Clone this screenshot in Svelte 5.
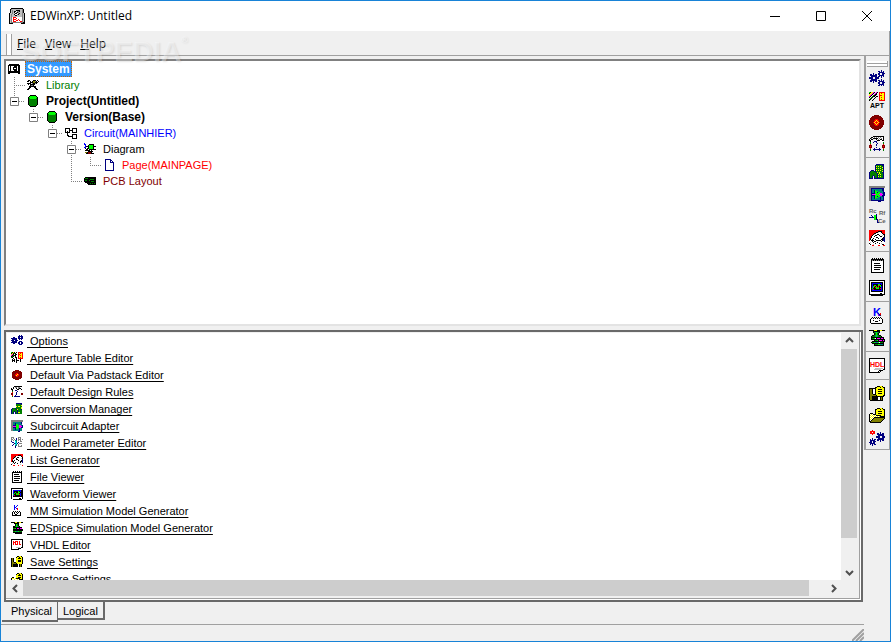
<script lang="ts">
  type Label = { text: string; x: number; y: number; size: number; color: string };
  type Icon = { rows: string[]; labels?: Label[] };

  const palette: Record<string, string> = {
    k: '#000000',
    n: '#000080',
    b: '#0000ff',
    r: '#ff0000',
    m: '#800000',
    g: '#008000',
    l: '#00ff00',
    y: '#ffff00',
    o: '#808000',
    w: '#ffffff',
    s: '#808080',
    v: '#c0c0c0',
    t: '#008080',
    c: '#00ffff',
    p: '#ff00ff'
  };

  // one character per pixel, a dot is transparent
  const icons: Record<string, Icon> = {
    app: {
      rows: [
        '..kkkkkkkkkkkk..',
        '.ksvvvvvvvvvvsk.',
        '.kvsvvvkkkkvvsk.',
        '.kvsvkkwsskvvsk.',
        '.kvsvkwsksvvvsk.',
        'kvvsvvkkwskvvsvk',
        'kvsvvkwwskvvvsvk',
        'kvsvvvkkvvvvvsvk',
        'kvsvvvvvvvvvvsvk',
        'kvswrrrwwwwwwsvk',
        'kvswrwwrwwwwwsvk',
        'kvswrrrwwrwwwsvk',
        'kvswrwwrrwrwwsvk',
        'kvswrrrwwwwrrsvk',
        'kvsssssssssssskk',
        'kkkk........kkkk'
      ]
    },
    options: {
      rows: [
        '............n...',
        '.........nn.n.n.',
        '..........nnnnn.',
        '....n....nnw.nnn',
        '.nn.n.nn.nn..nn.',
        '.nnnnnnn..nnnnn.',
        '..nnnnnn.nn.n.n.',
        'nnnn..nnnn..n...',
        'nnnn..nnnn......',
        '..nnnnnn....n...',
        '.nnnnnnn.nn.n.n.',
        '.nn.n.nn..nnnnn.',
        '....n....nn..nnn',
        '.........nn..nn.',
        '..........nnnnn.',
        '.........nn.n.n.'
      ]
    },
    aperture: {
      rows: [
        'lkyypk.pk.rrrrrr',
        'kyypk.pk..ryryyr',
        'yypk.pkk..ryyyyr',
        'ypk.gkk...rrryyr',
        'pk.gkk.kk.ryyyyr',
        'k.gk..k...ryryyr',
        '.gk..k....ryyyyr',
        'gk..k.....ryryyr',
        'k..k......rrrrrr',
        '................',
        '................',
        '................',
        '................',
        '................',
        '................',
        '................'
      ],
      labels: [{ text: 'APT', x: 1, y: 16, size: 7, color: '#000000' }]
    },
    via: {
      rows: [
        '................',
        '.....mmmmm......',
        '...mmmmmmmmm....',
        '..mmmmmmmmmmm...',
        '.mmmmmmmmmmmmm..',
        '.mmmmmrrrmmmmm..',
        'mmmmmrryrrmmmmm.',
        'mmmmmryryrmmmmm.',
        'mmmmryrrryrmmmm.',
        'mmmmmryryrmmmmm.',
        'mmmmmrryrrmmmmm.',
        '.mmmmmrrrmmmmm..',
        '.mmmmmmmmmmmmm..',
        '..mmmmmmmmmmm...',
        '...mmmmmmmmm....',
        '.....mmmmm......'
      ]
    },
    rules: {
      rows: [
        '....kkkkkkkkkkk.',
        '..kkwswswswswwk.',
        '.kswkkkkkwswswk.',
        'kwkk...kwswkkwk.',
        'kkw.....kkkwwkk.',
        '.kw..nnn..wwwww.',
        '.gw.n..n....w.g.',
        '.g......n.....g.',
        '.r.....n......r.',
        'mmm....n.....mmm',
        'mrm..........mrm',
        'mmm....n.....mmm',
        '.r...n....n...r.',
        '.g..nnnnnnnn..g.',
        '.g...n....n...g.',
        '................'
      ]
    },
    conversion: {
      rows: [
        '.......nnnnnnnn.',
        '......nggggggnn.',
        '......nygygyggn.',
        '......nggggggyn.',
        '......nygygyggn.',
        '......nggggggyn.',
        '..nnn.nygygyggn.',
        '.ngggnnggggggyn.',
        'nggggggnygyggnn.',
        'ngggggggngygggn.',
        'ngggggggnygyggn.',
        'ngggngggngggggn.',
        'nggn.nggnygyggn.',
        'nggn.nggngggggn.',
        'nnnn.nnnnnnnnnn.',
        '................'
      ]
    },
    subcircuit: {
      rows: [
        'ssssssssssssssss',
        'ssssssssssssssss',
        'ssnnnnnnnnnnnnn.',
        'ssnttttttttttnn.',
        'ssnttnlttttttnn.',
        'ssnttnllltttttn.',
        'ssnttnllnlltttnn',
        'ssnnnnlllllpptnn',
        'ssnpppplllppppnn',
        'ssnnnnlllllppnnn',
        'ssnttnllnllttnn.',
        'ssnttnlllttnttn.',
        'ssnttnlttttnttn.',
        'ssnttttttttnttn.',
        'ssnnnnnnnnnnnnn.',
        '.........nnn....'
      ]
    },
    parameters: {
      rows: [
        '................',
        '................',
        '................',
        '................',
        '................',
        '................',
        '.......n........',
        '..n..lln........',
        '...n.lln........',
        'nnnnnllk........',
        '.....llk........',
        '.....llnn.......',
        '........n.......',
        '........n.......',
        '........nn......',
        '................'
      ],
      labels: [
        { text: 'Rc', x: 0, y: 5, size: 6, color: '#606060' },
        { text: 'Rf', x: 10, y: 7, size: 6, color: '#606060' },
        { text: 'Ce', x: 9, y: 15, size: 6, color: '#606060' }
      ]
    },
    list: {
      rows: [
        'rrrrrrrrrrrrrrrr',
        'rrrrrrrrrkkkkrrr',
        'rrrrrrrkkvwwkrrr',
        'rrrrrkkwwwwwwkrr',
        'rrrrkvwwkkwwwwkk',
        'rrrkwwkkwwkwwvwk',
        'rrkwwkwwwwwkkwwk',
        'rrkwwwwkkwwwwwkn',
        'rkwwkwwwwkwwwknn',
        'rkwkwwkwwwwwkknn',
        'rwkkkwwkkkkkwknn',
        'wwwkwkkwwwwwkwwn',
        'wvwwkwwwkwwwwwww',
        'kwwwwwkwwwkwvwww',
        'wkwwvwwwwwwwwkkw',
        'wwwrrwwwwrrwwwrr'
      ]
    },
    viewer: {
      rows: [
        '...k.k.k.k.k.k..',
        '..kkkkkkkkkkkkk.',
        '..ksksksksksksk.',
        '..kwwwwwwwwwwwk.',
        '..kwwwwwwwwwwwk.',
        '..kwwkkkkkkwwwk.',
        '..kwwwwwwwwwwwk.',
        '..kwwkkkkkkkwwk.',
        '..kwwwwwwwwwwwk.',
        '..kwwkkkkkkkwwk.',
        '..kwwwwwwwwwwwk.',
        '..kwwkkkkkkwwwk.',
        '..kwwwwwwwwwwwk.',
        '..kwwwwwwwwwwwk.',
        '..kkkkkkkkkkkkk.',
        '................'
      ]
    },
    waveform: {
      rows: [
        'kkkkkkkkkkkkkkkk',
        'kwwwwwwwwwwwwwwk',
        'kwkkkkkkkkkkkkwk',
        'kwkbbbbbbbbbbkwk',
        'kwkbkkkkkllkbkwk',
        'kwkbkllkklrlkkwk',
        'kwkblrklkrklbkwk',
        'kwkblkrlrlkkbkwk',
        'kwklkkklllkrbkwk',
        'kwkbrkkkkkkkbkwk',
        'kwkbbbbbbbbbbkwk',
        'kwkkkkkkkkkkkkwk',
        'kwwwwwwwwwwwwwwk',
        'kwwwwwwwwwwkkwwk',
        'kkkkkkkkkkkkkkkk',
        '..kkkkkkkkkkkk..'
      ]
    },
    mm: {
      rows: [
        '................',
        '................',
        '................',
        '................',
        '................',
        '.........r.r....',
        '..........rr....',
        '.........rrr....',
        '................',
        '...k.k.k.k.k....',
        '..kwkwkwkwkwk...',
        '.kwwwwwwwwwwwk..',
        '.kwwkwwwwwkwwk..',
        '.kwwwwkkkwwwwk..',
        '.kwwwwwwwwwwwk..',
        '..kkkkkkkkkkk...'
      ],
      labels: [{ text: 'K', x: 4, y: 8, size: 11, color: '#0000ff' }]
    },
    spice: {
      rows: [
        'kkkkkyyykkkyykkk',
        '....kkkkkkk.....',
        '....kgtltgk.....',
        '.....kglgk......',
        '.....kglgk......',
        '...kkgtltgkk....',
        '..kgggtltgggk...',
        '..kkkkkkkkkkkkk.',
        '..kgglwkpppkppk.',
        '..kkkkkkkkkkkkkk',
        '.....kgglkpppkpk',
        '...kkkkkkkkkkkkk',
        '..kggltttlwgggk.',
        '...kkkkkkkkkkkk.',
        '.....kggglltttk.',
        '.....kkkkkkkkkk.'
      ]
    },
    vhdl: {
      rows: [
        'kkkkkkkkkkkkkkkk',
        'kwwwwwwwwwwwwwwk',
        'kwrwrwrrwwrwwwwk',
        'kwrwrwrwrwrwwwwk',
        'kwwwwwwwwwwwwwwk',
        'kwwwwwwwwwwwwwwk',
        'kwwwwwwwwwwwwwwk',
        'kwwwwwwwwwwwwwwk',
        'kwwwwwwwwwwwwwwk',
        'kwwwwwwwwwwwwwwk',
        'kwwwwwvvvvvvvvwk',
        'kwwwwvvvvvvvwwkk',
        'kwwwwwwwwwkkkk..',
        'kwwwwwwwwkwk....',
        'kkkkkkkkkkk.....',
        '................'
      ].map((row, y) => (y === 2 || y === 3 ? 'kwwwwwwwwwwwwwwk' : row)),
      labels: [{ text: 'HDL', x: 1, y: 9, size: 7, color: '#ff0000' }]
    },
    save: {
      rows: [
        '........kkkyyk..',
        '......kkyyykyykk',
        'kkkkkkkyyyyyyyyk',
        'kookwwkyykkkkyyk',
        'kookwwkyyyyyyyyk',
        'kookwwkyykkkkyyk',
        'kookwwkyyyyyyyyk',
        'kookwwkyykkkkyyk',
        'koookkkyyyyyyyyk',
        'kooooookyyyyyykk',
        'kookkkkkkkkkkkk.',
        'kookkkkkkwwkok..',
        'kookkkkkkwwkok..',
        'kookkkkkkwwkok..',
        '.kkkkkkkkkkkkk..',
        '................'
      ]
    },
    restore: {
      rows: [
        '........kkkyyk..',
        '......kkyyykyykk',
        '......kyyyyyyyyk',
        '......kyykkkkyyk',
        '......kyyyyyyyyk',
        '.kkk..kyykkkkyyk',
        'kwywkkkyyyyyyyyk',
        'kywywywkkkkkyyyk',
        'kwywywywywykkkkk',
        'kywywkkkkkkkkkkk',
        'kwywkooooooooook',
        'kywkooooooooook.',
        'kwkooooooooook..',
        'kkooooooooook...',
        '.kkkkkkkkkkk....',
        '................'
      ]
    },
    gears: {
      rows: [
        '...r............',
        '.rrrrr..........',
        '.rr.rr.....n....',
        '.rrrrr..nn.n.nn.',
        '...r....nnnnnnn.',
        '.........nnnnnn.',
        '.......nnnn..nnn',
        '.......nnnn..nnn',
        '...n.....nnnnnn.',
        '.n.n.nn.nnnnnnn.',
        '.nnnnn..nn.n.nn.',
        '.nn.nnn....n....',
        'nnn.nn..........',
        '.nnnnn..........',
        '.n.n.nn.........',
        '...n............'
      ]
    },
    system: {
      rows: [
        '............',
        '.kkkkkkkkkk.',
        'kkkkkkkkkkkk',
        'kwkwwwkkkwkk',
        'kwkwwkkkkwkk',
        'kwkwwkwwkwkk',
        'kwkwwkkkkwkk',
        'kwkwwwkkkwkk',
        'kkkkkkkkkkkk',
        'kkkkkkkkkkkk',
        'kk........kk',
        '............'
      ]
    },
    library: {
      rows: [
        '............',
        '.kk...kkk.k.',
        'kk.k.koosk.k',
        '...kkkookkk.',
        'kkkkwskksk..',
        '.k.kkkkk....',
        '...kssk.....',
        '..kkkkkkk...',
        '..kk...kk...',
        '.kk.....kk..',
        'kk.......kk.',
        '............'
      ]
    },
    database: {
      rows: [
        '...kkkkkk...',
        '..kllllllk..',
        '.kllllllllk.',
        '.kgllllllgk.',
        '.kggggggggk.',
        '.kggggggggk.',
        '.kggggggggk.',
        '.kggggggggk.',
        '.kggggggggk.',
        '.kggggggggk.',
        '..kggggggk..',
        '...kkkkkk...'
      ]
    },
    circuit: {
      rows: [
        '............',
        'kkkkk..kkkkk',
        'k...k..k...k',
        'k...kkkk...k',
        'k.k.k..k...k',
        'kkkkk..kkkkk',
        '..k.........',
        '..k....kkkkk',
        '..kk...k...k',
        '...kkkkk...k',
        '.......k...k',
        '.......kkkkk'
      ]
    },
    diagram: {
      rows: [
        'b...........',
        'bb...kkkkk..',
        '.b..kllllk..',
        '.bkkkllllkkk',
        'bb..kllllk..',
        '.k.kkllllk..',
        '..kk.kkkkkkk',
        '.kkkkk.k....',
        '....kkkkk...',
        '.ookmmmk....',
        '..kkmmmkkk..',
        '............'
      ]
    },
    page: {
      rows: [
        '..nnnnnn....',
        '..nwwwwnn...',
        '..nwwwwnwn..',
        '..nwwwwnnnn.',
        '..nwwwwwwwn.',
        '..nwwwwwwwn.',
        '..nwwwwwwwn.',
        '..nwwwwwwwn.',
        '..nwwwwwwwn.',
        '..nwwwwwwwn.',
        '..nwwwwwwwn.',
        '..nnnnnnnnn.'
      ]
    },
    pcb: {
      rows: [
        '............',
        '............',
        '.kkkkkkkkkkk',
        'kgggkkkkkkkk',
        'kkkkkkggggkk',
        'kggkkgkkkkkk',
        'kkkkkkkgggkk',
        '.kkkkkkkkkkk',
        '...kkkgkgkgk',
        '....kkkkkkkk',
        '............',
        '............'
      ]
    }
  };

  // redrawn 12px versions for icons that lose detail when scaled down
  const smallIcons: Record<string, Icon> = {
    options: {
      rows: [
        '........n.n.',
        '.......nnnnn',
        '..nn...nn.nn',
        'nnnnnn.nnnnn',
        '.nnnnn..n.n.',
        'nnn.nnn.....',
        '.nnnnn..nnn.',
        'nnnnnn.nn.nn',
        '..nn...nn.nn',
        '........nnn.',
        '............',
        '............'
      ]
    },
    aperture: {
      rows: [
        'lkyk.k.rrrrr',
        'kykgk..ryryr',
        'ypk.kk.rryyr',
        'pkgkk..ryryr',
        'kgk.k..ryyyr',
        'gk..kk.ryryr',
        '..k..k.rrrrr',
        '.k.k.k...k..',
        '.kkk.kkk.k..',
        '.k.k.k...k..',
        '.....k......',
        '............'
      ]
    },
    via: {
      rows: [
        '............',
        '....mmmm....',
        '..mmmmmmmm..',
        '.mmmmmmmmmm.',
        '.mmmmrrmmmm.',
        '.mmmrryrmmm.',
        '.mmmryrrmmm.',
        '.mmmmrrmmmm.',
        '.mmmmmmmmmm.',
        '..mmmmmmmm..',
        '....mmmm....',
        '............'
      ]
    },
    parameters: {
      rows: [
        'sss....sss..',
        's.s..n.s.s..',
        'ss.s.n.sss.s',
        's.s.tt.s.s..',
        'n...ct...ss.',
        '.nn.ct.n....',
        '...ntcn.sss.',
        '..n.ct.s....',
        '.n..tt.s..s.',
        '....n..ssss.',
        '....n.......',
        '............'
      ]
    },
    viewer: {
      rows: [
        '..k.k.k.k.k.',
        '.kkkkkkkkkk.',
        '.kwwwwwwwwk.',
        '.kwkkkkkwwk.',
        '.kwwwwwwwwk.',
        '.kwkkkkkkwk.',
        '.kwwwwwwwwk.',
        '.kwkkkkkkwk.',
        '.kwwwwwwwwk.',
        '.kwkkkkkwwk.',
        '.kwwwwwwwwk.',
        '.kkkkkkkkkk.'
      ]
    },
    mm: {
      rows: [
        '...b..b.....',
        '...b.b......',
        '...bb.......',
        '...b.br.....',
        '...b..r.....',
        '............',
        '..k.k.k.k...',
        '.kwkwkwkwk..',
        '.kwkwwkwwk..',
        '.kwwkkwwwk..',
        '.kkkkkkkkk..',
        '............'
      ]
    },
    vhdl: {
      rows: [
        'kkkkkkkkkkkk',
        'kwwwwwwwwwwk',
        'kwrwrrrwrwwk',
        'kwrrrwrwrwwk',
        'kwrwrwrwrwwk',
        'kwrwrrrwrrwk',
        'kwwwwwwwwwwk',
        'kwwwwwwwwwwk',
        'kwwwwvvvvwkk',
        'kwwwwwwkkk..',
        'kkkkkkkk....',
        '............'
      ]
    }
  };

  const toPixels = (rows: string[]) =>
    rows.flatMap((row, y) =>
      [...row.matchAll(/([a-z])\1*/g)].map((run) => ({
        x: run.index,
        y,
        width: run[0].length,
        fill: palette[run[1]]
      }))
    );

  // cells hold the connector drawn in each indent column
  const tree = [
    { name: 'System', icon: 'system', kind: 'root', cells: [] },
    { name: 'Library', icon: 'library', kind: 'library', cells: ['tee'] },
    { name: 'Project(Untitled)', icon: 'database', kind: 'project', cells: ['minus'] },
    { name: 'Version(Base)', icon: 'database', kind: 'project', cells: ['', 'minus'] },
    { name: 'Circuit(MAINHIER)', icon: 'circuit', kind: 'circuit', cells: ['', '', 'minus'] },
    { name: 'Diagram', icon: 'diagram', kind: 'diagram', cells: ['', '', '', 'minus more'] },
    { name: 'Page(MAINPAGE)', icon: 'page', kind: 'page', cells: ['', '', '', 'line', 'end'] },
    { name: 'PCB Layout', icon: 'pcb', kind: 'pcb', cells: ['', '', '', 'end'] }
  ];

  const toolGroups = [
    [
      { icon: 'options', name: 'Options' },
      { icon: 'aperture', name: 'Aperture Table Editor' },
      { icon: 'via', name: 'Default Via Padstack Editor' },
      { icon: 'rules', name: 'Default Design Rules' }
    ],
    [
      { icon: 'conversion', name: 'Conversion Manager' },
      { icon: 'subcircuit', name: 'Subcircuit Adapter' },
      { icon: 'parameters', name: 'Model Parameter Editor' },
      { icon: 'list', name: 'List Generator' }
    ],
    [
      { icon: 'viewer', name: 'File Viewer' },
      { icon: 'waveform', name: 'Waveform Viewer' }
    ],
    [
      { icon: 'mm', name: 'MM Simulation Model Generator' },
      { icon: 'spice', name: 'EDSpice Simulation Model Generator' }
    ],
    [{ icon: 'vhdl', name: 'VHDL Editor' }],
    [
      { icon: 'save', name: 'Save Settings' },
      { icon: 'restore', name: 'Restore Settings' },
      { icon: 'gears', name: 'Reset Settings' }
    ]
  ];

  const commands = toolGroups.flat().slice(0, -1);
  const menus = ['File', 'View', 'Help'];
  const tabs = ['Physical', 'Logical'];

  let selected = $state('System');
  let activeTab = $state('Physical');
</script>

{#snippet glyph(icon: Icon, size: number)}
  {@const grid = icon.rows.length}
  <svg class="glyph" width={size} height={size} viewBox="0 0 {grid} {grid}" aria-hidden="true">
    {#each toPixels(icon.rows) as p}
      <rect x={p.x} y={p.y} width={p.width} height="1" fill={p.fill} />
    {/each}
    {#each icon.labels ?? [] as label}
      <text x={label.x} y={label.y} font-size={label.size} fill={label.color}>{label.text}</text>
    {/each}
  </svg>
{/snippet}

{#snippet chevron(d: string)}
  <svg width="9" height="9" viewBox="0 0 9 9" aria-hidden="true">
    <path {d} fill="none" stroke="#505050" stroke-width="2" />
  </svg>
{/snippet}

<div class="window">
  <header class="titlebar">
    {@render glyph(icons.app, 16)}
    <span class="title">EDWinXP: Untitled</span>
    <button class="caption" aria-label="Minimize">
      <svg width="12" height="12"><path d="M1 6.5h10" /></svg>
    </button>
    <button class="caption" aria-label="Maximize">
      <svg width="12" height="12"><path d="M1.5 1.5h9v9h-9z" /></svg>
    </button>
    <button class="caption" aria-label="Close">
      <svg width="12" height="12"><path d="M1 1l10 10M11 1L1 11" /></svg>
    </button>
  </header>

  <nav class="menubar">
    <span class="grip"></span>
    {#each menus as menu}
      <button class="menu"><u>{menu[0]}</u>{menu.slice(1)}</button>
    {/each}
    <span class="watermark">SOFTPEDIA<sup>®</sup></span>
  </nav>

  <div class="body">
    <main>
      <div class="panels">
        <ul class="tree" role="tree">
          {#each tree as node}
            <li class="node" role="treeitem" aria-selected={selected === node.name}>
              {#each node.cells as cell}
                {#if cell.startsWith('minus')}
                  <button class="branch" aria-label="Collapse {node.name}">
                    <svg width="19" height="16">
                      <path class="dots" d="M8.5 0V4M13 8.5H20" />
                      {#if cell === 'minus more'}
                        <path class="dots" d="M8.5 12V16" />
                      {/if}
                      <path class="box" d="M4.5 4.5h8v8h-8z" />
                      <path class="sign" d="M6 8.5h5" />
                    </svg>
                  </button>
                {:else}
                  <svg class="branch" width="19" height="16">
                    {#if cell === 'tee'}
                      <path class="dots" d="M8.5 0V16M8 8.5H20" />
                    {:else if cell === 'end'}
                      <path class="dots" d="M8.5 0V8M8 8.5H20" />
                    {:else if cell === 'line'}
                      <path class="dots" d="M8.5 0V16" />
                    {/if}
                  </svg>
                {/if}
              {/each}
              <span class="node-icon">{@render glyph(icons[node.icon], 12)}</span>
              <button
                class="node-name {node.kind}"
                class:selected={selected === node.name}
                onclick={() => (selected = node.name)}>{node.name}</button
              >
            </li>
          {/each}
        </ul>

        <section class="commands">
          <ul class="command-list">
            {#each commands as command}
              <li>
                {@render glyph(smallIcons[command.icon] ?? icons[command.icon], 12)}
                <a href="#{command.icon}">&nbsp;{command.name}</a>
              </li>
            {/each}
          </ul>
          <div class="scroll vertical">
            <button aria-label="Scroll up">{@render chevron('M1 6l3.5-3.5L8 6')}</button>
            <div class="track"><div class="thumb"></div></div>
            <button aria-label="Scroll down">{@render chevron('M1 3l3.5 3.5L8 3')}</button>
          </div>
          <div class="scroll horizontal">
            <button aria-label="Scroll left">{@render chevron('M6 1L2.5 4.5 6 8')}</button>
            <div class="track"><div class="thumb"></div></div>
            <button aria-label="Scroll right">{@render chevron('M3 1l3.5 3.5L3 8')}</button>
          </div>
        </section>
      </div>

      <div class="tabs" role="tablist">
        {#each tabs as tab}
          <button
            class="tab"
            class:active={activeTab === tab}
            role="tab"
            aria-selected={activeTab === tab}
            onclick={() => (activeTab = tab)}>{tab}</button
          >
        {/each}
      </div>

      <footer class="status">
        <svg width="12" height="12" aria-hidden="true">
          <path d="M0 12L12 0M4 12l8-8M8 12l4-4" stroke="#a0a0a0" stroke-width="2" />
        </svg>
      </footer>
    </main>

    <aside>
      <div class="toolbar">
        <span class="toolbar-grip"></span>
        <span class="toolbar-grip"></span>
        {#each toolGroups as group}
          <div class="group">
            {#each group as tool}
              <button class="tool" title={tool.name} aria-label={tool.name}>
                {@render glyph(icons[tool.icon], 16)}
              </button>
            {/each}
          </div>
        {/each}
      </div>
    </aside>
  </div>
</div>

<style>
  :global(body) {
    background: #f0f0f0;
  }

  .window {
    box-sizing: border-box;
    display: flex;
    flex-direction: column;
    height: 100vh;
    min-height: 520px;
    border: 1px solid #1883d7;
    background: #f0f0f0;
    color: #000;
    font-family: 'Liberation Sans', Arial, sans-serif;
    font-size: 11px;
    line-height: 16px;
  }

  button {
    margin: 0;
    padding: 0;
    border: none;
    background: transparent;
    color: inherit;
    font: inherit;
  }

  ul {
    margin: 0;
    padding: 0;
    list-style: none;
  }

  svg {
    display: block;
    flex: none;
  }

  .glyph {
    overflow: visible;
    shape-rendering: crispEdges;
  }

  .glyph text {
    font-weight: bold;
  }

  .titlebar {
    display: flex;
    align-items: center;
    height: 30px;
    padding-left: 8px;
    background: #fff;
    font-family: 'Open Sans', 'Noto Sans', sans-serif;
    font-size: 12px;
  }

  .title {
    flex: 1;
    padding-left: 5px;
  }

  .caption {
    display: flex;
    align-items: center;
    justify-content: center;
    width: 46px;
    height: 30px;
  }

  .caption path {
    fill: none;
    stroke: #000;
  }

  .menubar {
    position: relative;
    display: flex;
    align-items: center;
    gap: 9px;
    box-sizing: border-box;
    height: 25px;
    padding-top: 2px;
    padding-left: 5px;
    border-right: 1px solid #a0a0a0;
    border-bottom: 1px solid #a0a0a0;
    font-family: 'Open Sans', 'Noto Sans', sans-serif;
    font-size: 12px;
  }

  .grip {
    box-sizing: border-box;
    width: 6px;
    height: 21px;
    margin-right: -4px;
    border-right: 1px solid #a0a0a0;
    border-left: 1px solid #a0a0a0;
    background: #fff;
  }

  .watermark {
    position: absolute;
    top: 5px;
    left: 20px;
    z-index: 1;
    color: rgba(255, 255, 255, 0.4);
    font-family: 'Liberation Sans', Arial, sans-serif;
    font-size: 28px;
    font-weight: bold;
    line-height: 32px;
    text-shadow: 1px 1px 2px rgba(0, 0, 0, 0.1);
    pointer-events: none;
  }

  .watermark sup {
    font-size: 9px;
    line-height: 8px;
    vertical-align: top;
  }

  .body {
    display: flex;
    flex: 1;
    min-height: 0;
  }

  main {
    display: flex;
    flex: 1;
    flex-direction: column;
    min-width: 0;
  }

  .panels {
    display: flex;
    flex: 1;
    flex-direction: column;
    gap: 4px;
    min-height: 0;
    padding: 3px 1px 0 3px;
  }

  .tree {
    flex: 266;
    min-height: 0;
    margin-right: 2px;
    overflow: hidden;
    border: 2px solid;
    border-color: #808080 #e3e3e3 #e3e3e3 #808080;
    background: #fff;
  }

  .node {
    display: flex;
    align-items: center;
    height: 16px;
  }

  .branch {
    width: 19px;
    height: 16px;
    flex: none;
  }

  .dots {
    stroke: #808080;
    stroke-dasharray: 1 1;
  }

  .box {
    fill: #fff;
    stroke: #808080;
  }

  .sign {
    stroke: #000;
  }

  .node-icon {
    box-sizing: border-box;
    flex: none;
    width: 19px;
    padding-left: 2px;
  }

  .node-name {
    box-sizing: border-box;
    height: 16px;
    padding: 0 1px;
    border: 1px solid transparent;
    line-height: 14px;
    white-space: nowrap;
  }

  .root,
  .project {
    font-size: 12px;
    font-weight: bold;
  }

  .library {
    color: #008000;
  }

  .circuit {
    color: #0000ff;
  }

  .page {
    color: #ff0000;
  }

  .pcb {
    color: #800000;
  }

  .node-name.selected {
    border: 1px dotted #cc6600;
    background: #3399ff;
    color: #fff;
  }

  .commands {
    display: grid;
    flex: 267;
    grid-template-columns: 1fr 16px;
    grid-template-rows: 1fr 16px;
    min-height: 0;
    padding: 1px 4px 4px 1px;
    border: 2px solid #696969;
    box-shadow: inset -1px -1px #fff, inset -2px -2px #a0a0a0;
  }

  .command-list {
    min-height: 0;
    overflow: hidden;
    background: #fff;
  }

  .command-list li {
    display: flex;
    align-items: center;
    gap: 4px;
    height: 17px;
    padding-left: 4px;
  }

  .command-list a {
    color: #000;
    white-space: nowrap;
    text-underline-offset: 2px;
  }

  .scroll {
    display: flex;
  }

  .scroll button {
    display: flex;
    flex: none;
    align-items: center;
    justify-content: center;
    width: 16px;
    height: 16px;
  }

  .scroll.vertical {
    flex-direction: column;
  }

  .track {
    flex: 1;
  }

  .thumb {
    background: #cdcdcd;
  }

  .vertical .thumb {
    width: 100%;
    height: 88%;
  }

  .horizontal .thumb {
    width: 98%;
    height: 100%;
  }

  .tabs {
    display: flex;
    align-items: flex-start;
    height: 20px;
    padding-left: 1px;
  }

  .tab {
    box-sizing: border-box;
    height: 18px;
    padding: 0 5px;
    border: solid #696969;
    border-width: 0 2px 2px 0;
    line-height: 18px;
  }

  .tab.active {
    height: 20px;
    padding: 0 5px 0 9px;
    border-width: 0 1px 2px 0;
  }

  .status {
    display: flex;
    align-items: flex-end;
    justify-content: flex-end;
    height: 16px;
    margin-top: 2px;
    border-top: 1px solid #a0a0a0;
  }

  aside {
    width: 26px;
  }

  .toolbar {
    border: solid #a0a0a0;
    border-width: 0 1px 1px 2px;
    padding-top: 5px;
  }

  .toolbar-grip {
    box-sizing: border-box;
    display: block;
    height: 3px;
    margin: 0 1px;
    border: solid #a0a0a0;
    border-width: 0 1px 1px 0;
    background: #fff;
  }

  .group + .group {
    margin-top: 2px;
    padding-top: 3px;
    border-top: 1px solid #a0a0a0;
  }

  .tool {
    display: flex;
    align-items: center;
    justify-content: center;
    width: 22px;
    height: 22px;
  }
</style>
